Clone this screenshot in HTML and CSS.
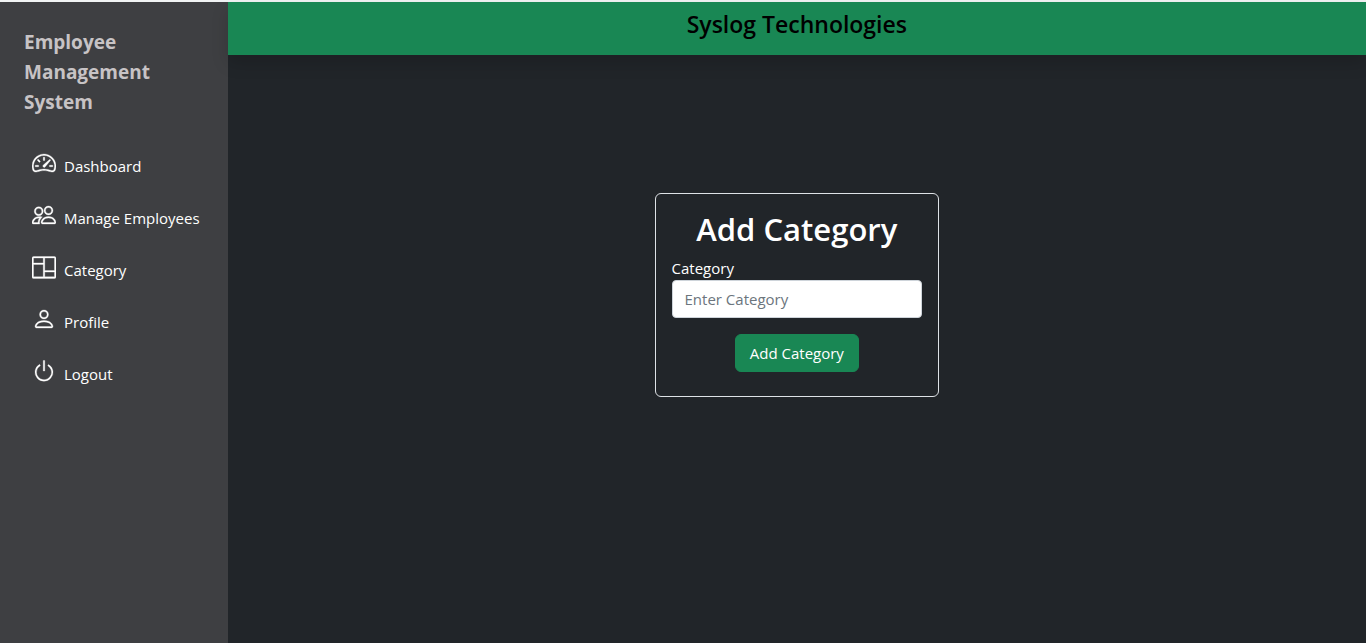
FILE: index.html
```html
<!DOCTYPE html>
<html lang="en">
<head>
<meta charset="utf-8">
<meta name="viewport" content="width=device-width, initial-scale=1">
<title>Employee Management System</title>
<link rel="stylesheet" href="styles.css">
</head>
<body>
<div class="layout">
  <aside class="sidebar">
    <a class="brand" href="#">Employee Management System</a>
    <nav>
      <ul class="menu">
        <li><a class="menu-link" href="#">
          <svg class="icon" viewBox="0 0 16 16" aria-hidden="true"><path d="M8 4a.5.5 0 0 1 .5.5V6a.5.5 0 0 1-1 0V4.5A.5.5 0 0 1 8 4zM3.732 5.732a.5.5 0 0 1 .707 0l.915.914a.5.5 0 1 1-.708.708l-.914-.915a.5.5 0 0 1 0-.707zM2 10a.5.5 0 0 1 .5-.5h1.586a.5.5 0 0 1 0 1H2.5A.5.5 0 0 1 2 10zm9.5 0a.5.5 0 0 1 .5-.5h1.5a.5.5 0 0 1 0 1H12a.5.5 0 0 1-.5-.5zm.754-4.246a.389.389 0 0 0-.527-.02L7.547 9.31a.91.91 0 1 0 1.302 1.258l3.434-4.297a.389.389 0 0 0-.029-.518z"/><path fill-rule="evenodd" d="M0 10a8 8 0 1 1 15.547 2.661c-.442 1.253-1.845 1.602-2.932 1.25C11.309 13.488 9.475 13 8 13c-1.474 0-3.31.488-4.615.911-1.087.352-2.49.003-2.932-1.25A7.988 7.988 0 0 1 0 10zm8-7a7 7 0 0 0-6.603 9.329c.203.575.923.876 1.68.63C4.397 12.533 6.358 12 8 12s3.604.532 4.923.96c.757.245 1.477-.056 1.68-.631A7 7 0 0 0 8 3z"/></svg>
          <span class="menu-text">Dashboard</span></a></li>
        <li><a class="menu-link" href="#">
          <svg class="icon" viewBox="0 0 16 16" aria-hidden="true"><path d="M15 14s1 0 1-1-1-4-5-4-5 3-5 4 1 1 1 1h8Zm-7.978-1A.261.261 0 0 1 7 12.996c.001-.264.167-1.03.76-1.72C8.312 10.629 9.282 10 11 10c1.717 0 2.687.63 3.24 1.276.593.69.758 1.457.76 1.72l-.008.002a.274.274 0 0 1-.014.002H7.022ZM11 7a2 2 0 1 0 0-4 2 2 0 0 0 0 4Zm3-2a3 3 0 1 1-6 0 3 3 0 0 1 6 0ZM6.936 9.28a5.88 5.88 0 0 0-1.23-.247A7.35 7.35 0 0 0 5 9c-4 0-5 3-5 4 0 .667.333 1 1 1h4.216A2.238 2.238 0 0 1 5 13c0-1.01.377-2.042 1.09-2.904.243-.294.526-.569.846-.816ZM4.92 10A5.493 5.493 0 0 0 4 13H1c0-.26.164-1.03.76-1.724.545-.636 1.492-1.256 3.16-1.275ZM1.5 5.5a3 3 0 1 1 6 0 3 3 0 0 1-6 0Zm3-2a2 2 0 1 0 0 4 2 2 0 0 0 0-4Z"/></svg>
          <span class="menu-text">Manage Employees</span></a></li>
        <li><a class="menu-link" href="#">
          <svg class="icon" viewBox="0 0 16 16" aria-hidden="true"><path fill-rule="evenodd" d="M1 1h14a1 1 0 0 1 1 1v12.6a1 1 0 0 1-1 1H1a1 1 0 0 1-1-1V2a1 1 0 0 1 1-1zM8.500 2v8.400H15V2H8.500zM8.500 11.400v3.100H15v-3.100H8.500zM1 2v3.300h6.500V2H1zM1 6.300v8.200h6.500V6.300H1z"/></svg>
          <span class="menu-text">Category</span></a></li>
        <li><a class="menu-link" href="#">
          <svg class="icon" viewBox="0 0 16 16" aria-hidden="true"><path d="M8 8a3 3 0 1 0 0-6 3 3 0 0 0 0 6Zm2-3a2 2 0 1 1-4 0 2 2 0 0 1 4 0Zm4 8c0 1-1 1-1 1H3s-1 0-1-1 1-4 6-4 6 3 6 4Zm-1-.004c-.001-.246-.154-.986-.832-1.664C11.516 10.68 10.289 10 8 10c-2.29 0-3.516.68-4.168 1.332-.678.678-.83 1.418-.832 1.664h10Z"/></svg>
          <span class="menu-text">Profile</span></a></li>
        <li><a class="menu-link" href="#">
          <svg class="icon" viewBox="0 0 16 16" aria-hidden="true"><path d="M7.5 1v7h1V1h-1z"/><path d="M3 8.812a4.999 4.999 0 0 1 2.578-4.375l-.485-.874A6 6 0 1 0 11 3.616l-.501.865A5 5 0 1 1 3 8.812z"/></svg>
          <span class="menu-text">Logout</span></a></li>
      </ul>
    </nav>
  </aside>
  <main class="main">
    <header class="topbar"><h4 class="topbar-title">Syslog Technologies</h4></header>
    <section class="stage">
      <div class="card">
        <h2 class="card-title">Add Category</h2>
        <form>
          <label class="label" for="category">Category</label>
          <input class="field" type="text" id="category" name="category" placeholder="Enter Category">
          <div class="actions"><button class="button" type="button">Add Category</button></div>
        </form>
      </div>
    </section>
  </main>
</div>
</body>
</html>
```
FILE: styles.css
```css
*,
*::before,
*::after {
  box-sizing: border-box;
}

body {
  margin: 0;
  background: #212529;
  color: #fff;
  font-family: "Segoe UI", "Open Sans", "Noto Sans", sans-serif;
  font-size: 15px;
  line-height: 24px;
}

.layout {
  display: grid;
  grid-template-columns: minmax(0, 1fr) minmax(0, 5fr);
  min-height: 100vh;
  border-top: 2px solid #f1f3f4;
}

.sidebar {
  padding: 25px 24px 0;
  background: #3e3f42;
}

.brand {
  display: block;
  color: #c7c3c5;
  font-size: 19px;
  font-weight: 700;
  line-height: 30px;
  text-decoration: none;
}

.menu {
  margin: 23px 0 0;
  padding: 0;
  list-style: none;
}

.menu-link {
  display: flex;
  gap: 8px;
  height: 52px;
  padding: 11px 0 0 8px;
  color: #fff;
  text-decoration: none;
  white-space: nowrap;
}

.icon {
  flex: none;
  width: 24px;
  height: 24px;
  fill: currentColor;
  stroke: currentColor;
  stroke-width: 0.2;
}

.menu-text {
  padding-top: 3px;
}

.main {
  min-width: 0;
}

.topbar {
  padding: 8px;
  background: #198754;
  box-shadow: 0 8px 16px rgba(0, 0, 0, 0.15);
}

.topbar-title {
  margin: 0 0 8px;
  color: #000;
  font-size: 23px;
  font-weight: 600;
  line-height: 29px;
  text-align: center;
}

.stage {
  display: flex;
  align-items: center;
  justify-content: center;
  height: calc(75vh - 2px);
}

.card {
  width: 25%;
  min-width: 250px;
  padding: 16px 16px 24px;
  border: 1px solid #dee2e6;
  border-radius: 6px;
}

.card-title {
  margin: 0 0 8px;
  font-size: 31px;
  font-weight: 600;
  line-height: 38px;
  text-align: center;
}

.label {
  display: block;
}

.field {
  display: block;
  width: 100%;
  height: 38px;
  padding: 6px 12px;
  border: 1px solid #ced4da;
  border-radius: 4px;
  background: #fff;
  color: #212529;
  font: inherit;
}

.field::placeholder {
  color: #6c757d;
  opacity: 1;
}

.actions {
  margin-top: 16px;
  text-align: center;
}

.button {
  display: inline-block;
  height: 38px;
  padding: 6px 14px;
  border: 1px solid #198754;
  border-radius: 6px;
  background: #198754;
  color: #fff;
  font: inherit;
  vertical-align: top;
}
```
